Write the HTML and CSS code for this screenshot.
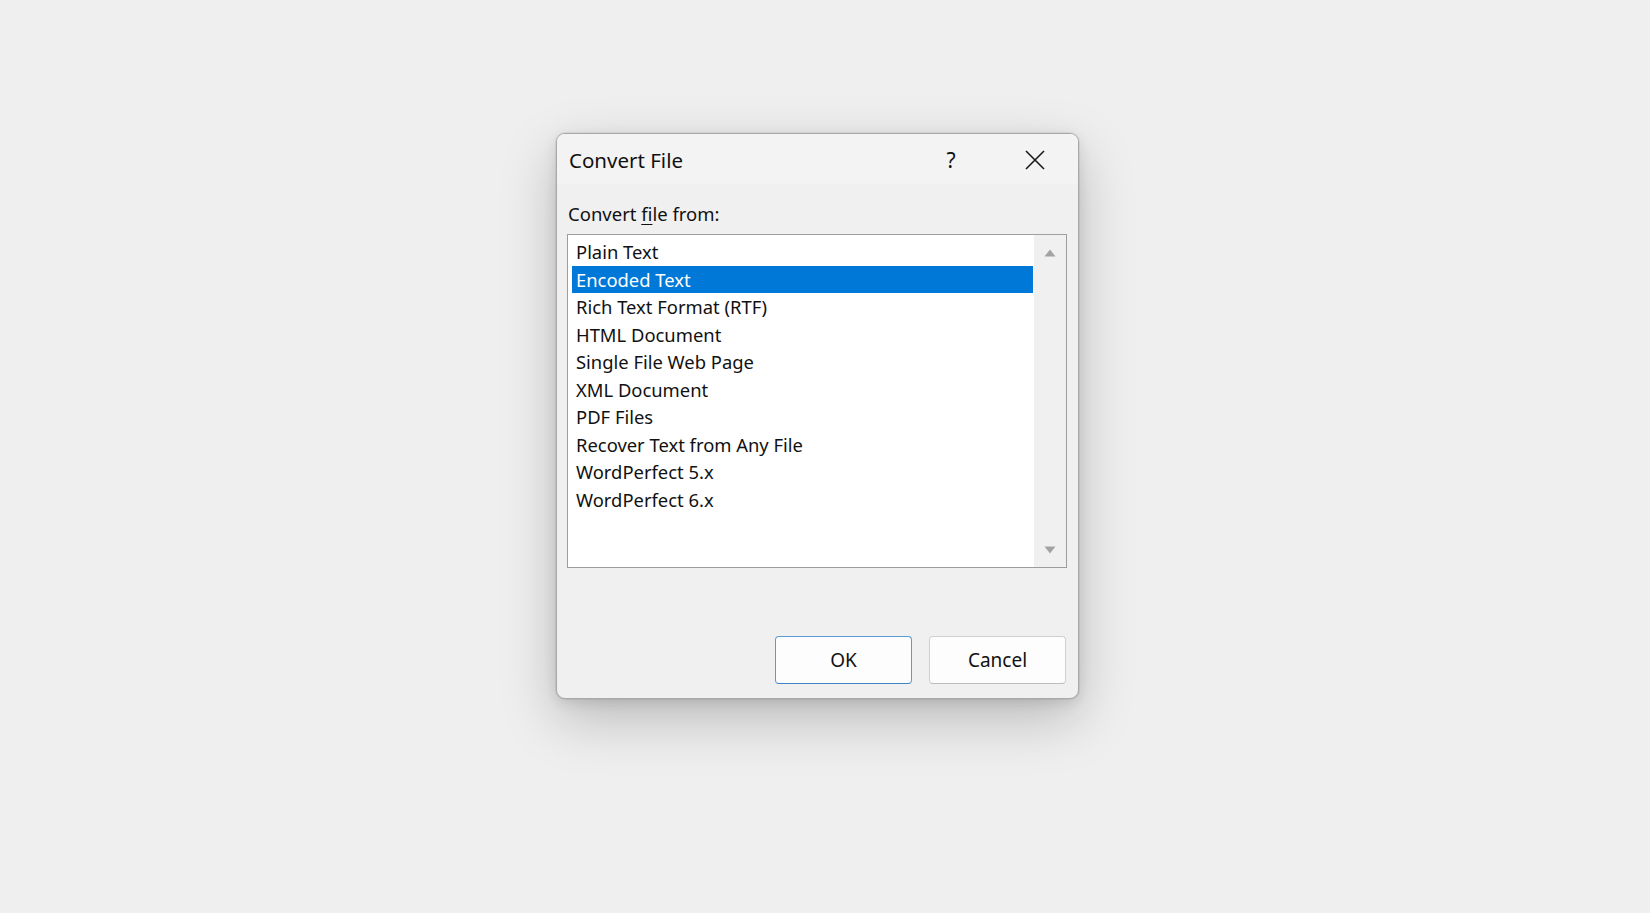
FILE: index.html
```html
<!DOCTYPE html>
<html lang="en">
<head>
<meta charset="utf-8">
<title>Convert File</title>
<link rel="stylesheet" href="styles.css">
</head>
<body>
<div class="dialog">
  <div class="titlebar">
    <span class="title">Convert File</span>
    <span class="help">?</span>
    <span class="close">
      <svg width="20" height="20" viewBox="0 0 20 20"><path d="M1 1 L19 19 M19 1 L1 19" stroke="#1a1a1a" stroke-width="1.6" fill="none"/></svg>
    </span>
  </div>
  <div class="content">
    <div class="label">Convert <u>f</u>ile from:</div>
    <div class="listbox">
      <ul class="items">
        <li>Plain Text</li>
        <li class="selected">Encoded Text</li>
        <li>Rich Text Format (RTF)</li>
        <li>HTML Document</li>
        <li>Single File Web Page</li>
        <li>XML Document</li>
        <li>PDF Files</li>
        <li>Recover Text from Any File</li>
        <li>WordPerfect 5.x</li>
        <li>WordPerfect 6.x</li>
      </ul>
      <div class="scrollbar">
        <svg width="12" height="8" viewBox="0 0 12 8"><path d="M6 0.5 L11.5 7.5 L0.5 7.5 Z" fill="#a3a3a3"/></svg>
        <svg width="12" height="8" viewBox="0 0 12 8"><path d="M0.5 0.5 L11.5 0.5 L6 7.5 Z" fill="#a3a3a3"/></svg>
      </div>
    </div>
    <div class="buttons">
      <button class="btn default">OK</button>
      <button class="btn">Cancel</button>
    </div>
  </div>
</div>
</body>
</html>
```
FILE: styles.css
```css
html, body {
  margin: 0;
  padding: 0;
}
body {
  background: #efefef;
  width: 1650px;
  height: 913px;
  overflow: hidden;
  font-family: "Noto Sans", "Open Sans", "DejaVu Sans", sans-serif;
  color: #111;
}
.dialog {
  margin: 133px 0 0 556px;
  width: 523px;
  height: 566px;
  box-sizing: border-box;
  border: 1px solid #a9a9a9;
  border-radius: 9px;
  background: #f0f0f0;
  box-shadow: 0 0 0 1px rgba(0,0,0,0.06), 0 20px 55px rgba(0,0,0,0.22), 0 4px 14px rgba(0,0,0,0.10);
  overflow: hidden;
  display: flex;
  flex-direction: column;
}
.titlebar {
  height: 50px;
  flex: none;
  background: #f3f3f3;
  display: flex;
  align-items: center;
  padding-left: 12px;
  padding-top: 2px;
  box-sizing: border-box;
}
.title {
  font-size: 20.5px;
  flex: 1;
  color: #111;
}
.help {
  font-size: 21px;
  width: 20px;
  margin-right: 64px;
  text-align: center;
}
.close {
  width: 20px;
  height: 20px;
  margin-right: 33px;
  display: flex;
}
.content {
  flex: 1;
  display: flex;
  flex-direction: column;
  padding: 18px 11px 14px 10px;
}
.label {
  font-size: 18.5px;
  line-height: 24px;
  margin-left: 1px;
  margin-bottom: 8px;
}
.label u {
  text-decoration-thickness: 1px;
  text-underline-offset: 3px;
}
.listbox {
  height: 334px;
  box-sizing: border-box;
  border: 1px solid #9c9c9c;
  border-top-color: #a0a0a0;
  background: #fff;
  display: flex;
  padding: 3px 0 2px 4px;
}
.items {
  list-style: none;
  margin: 0;
  padding: 0;
  flex: 1;
}
.items li {
  height: 27.5px;
  line-height: 28px;
  font-size: 18.4px;
  padding-left: 4px;
  color: #111;
}
.items li.selected {
  background: #0078d7;
  color: #fff;
}
.scrollbar {
  width: 32px;
  margin-top: -3px;
  margin-bottom: -2px;
  background: #f0f0f0;
  display: flex;
  flex-direction: column;
  align-items: center;
  justify-content: space-between;
  padding: 14px 0 13px;
  margin-left: 1px;
}
.scrollbar svg {
  display: block;
}
.buttons {
  margin-top: auto;
  display: flex;
  justify-content: flex-end;
  gap: 17px;
  margin-right: 1px;
}
.btn {
  width: 137px;
  height: 48px;
  box-sizing: border-box;
  border: 1px solid #d0d0d0;
  border-bottom-color: #bcbcbc;
  border-radius: 4px;
  background: #fdfdfd;
  font-family: inherit;
  font-size: 19px;
  color: #111;
  padding: 0;
}
.btn.default {
  border-color: #5a9bd6;
  border-bottom-color: #3f86c9;
}
```
